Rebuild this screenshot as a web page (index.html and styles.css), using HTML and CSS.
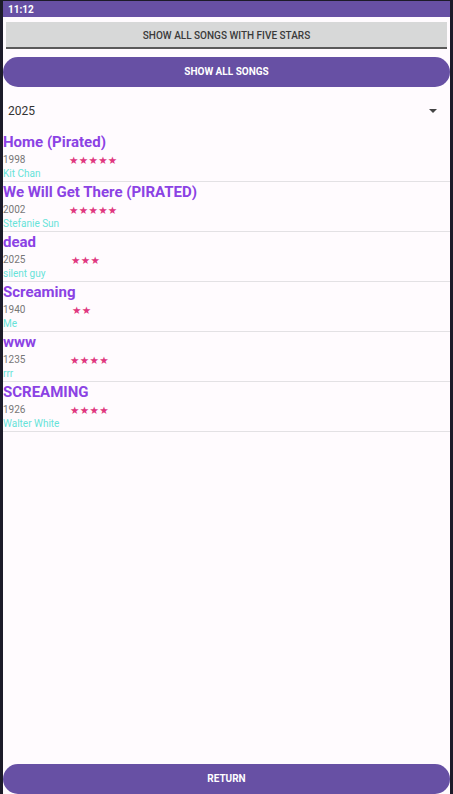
FILE: index.html
```html
<!DOCTYPE html>
<html>
<head>
<meta charset="utf-8">
<link rel="stylesheet" href="styles.css">
</head>
<body>
<div class="phone">
  <div class="status">11:12</div>
  <div class="btn-gray">SHOW ALL SONGS WITH FIVE STARS</div>
  <div class="btn-purple">SHOW ALL SONGS</div>
  <div class="spinner">
    <span class="spin-text">2025</span>
    <span class="arrow"></span>
  </div>
  <div class="list">
    <div class="item">
      <div class="title">Home (Pirated)</div>
      <div class="meta"><span class="year">1998</span><span class="stars r5">★★★★★</span></div>
      <div class="artist">Kit Chan</div>
    </div>
    <div class="item">
      <div class="title">We Will Get There (PIRATED)</div>
      <div class="meta"><span class="year">2002</span><span class="stars r5">★★★★★</span></div>
      <div class="artist">Stefanie Sun</div>
    </div>
    <div class="item">
      <div class="title">dead</div>
      <div class="meta"><span class="year">2025</span><span class="stars r3">★★★</span></div>
      <div class="artist">silent guy</div>
    </div>
    <div class="item">
      <div class="title">Screaming</div>
      <div class="meta"><span class="year">1940</span><span class="stars r2">★★</span></div>
      <div class="artist">Me</div>
    </div>
    <div class="item">
      <div class="title">www</div>
      <div class="meta"><span class="year">1235</span><span class="stars r4">★★★★</span></div>
      <div class="artist">rrr</div>
    </div>
    <div class="item">
      <div class="title">SCREAMING</div>
      <div class="meta"><span class="year">1926</span><span class="stars r4">★★★★</span></div>
      <div class="artist">Walter White</div>
    </div>
  </div>
  <div class="btn-purple btn-return">RETURN</div>
</div>
</body>
</html>
```

FILE: styles.css
```css
html, body {
  margin: 0;
  padding: 0;
  background: #1c1b29;
  height: 794px;
  overflow: hidden;
}
.phone {
  margin: 1px 3px 0;
  width: 447px;
  height: 793px;
  background: #fffbfe;
  display: flex;
  flex-direction: column;
  font-family: Roboto, "Liberation Sans", sans-serif;
}
.status {
  height: 16px;
  line-height: 17px;
  background: #6750a4;
  color: #fff;
  font-weight: 700;
  font-size: 10px;
  padding-left: 5px;
}
.btn-gray {
  margin: 5px 3px 0;
  box-sizing: border-box;
  height: 27px;
  padding-top: 3px;
  line-height: 22px;
  background: #d7d8d8;
  border-bottom: 2px solid #5a5a5a;
  text-align: center;
  font-size: 10px;
  font-weight: 500;
  color: #3a3a3a;
}
.btn-purple {
  margin-top: 8px;
  height: 30px;
  line-height: 30px;
  border-radius: 15px;
  background: #6750a4;
  color: #fff;
  text-align: center;
  font-size: 10px;
  font-weight: 700;
}
.spinner {
  box-sizing: border-box;
  height: 45px;
  padding: 3px 13px 0 5px;
  display: flex;
  align-items: center;
  justify-content: space-between;
}
.spin-text {
  font-size: 12px;
  color: #333;
}
.arrow {
  width: 0;
  height: 0;
  border-left: 4px solid transparent;
  border-right: 4px solid transparent;
  border-top: 4px solid #444;
}
.list {
  flex: 1;
}
.item {
  height: 50px;
  box-sizing: border-box;
  border-bottom: 1px solid #e3e1e4;
}
.title {
  height: 21px;
  line-height: 21px;
  font-size: 15px;
  font-weight: 700;
  color: #8b42e4;
  white-space: nowrap;
}
.meta {
  height: 14px;
  line-height: 14px;
  display: flex;
  align-items: center;
}
.year {
  width: 66px;
  font-size: 10px;
  color: #777;
}
.stars {
  font-family: "DejaVu Sans", sans-serif;
  font-size: 10.5px;
  letter-spacing: 0.3px;
  color: #e0377f;
}
.r4 { margin-left: 1px; }
.r3 { margin-left: 2px; }
.r2 { margin-left: 3px; }
.artist {
  height: 14px;
  line-height: 14px;
  font-size: 10px;
  color: #67e3d9;
}
.btn-return {
  margin-top: 0;
  height: 30px;
}
```
